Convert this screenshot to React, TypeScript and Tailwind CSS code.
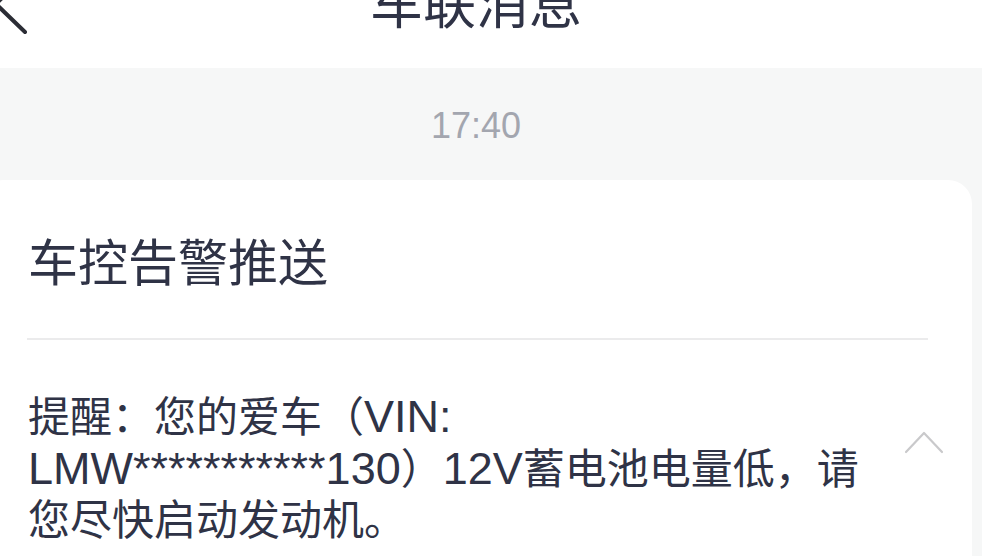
const font = {
  fontFamily:
    '"Liberation Sans", "Noto Sans CJK SC", "Noto Sans", sans-serif',
};

function Header() {
  return (
    <div className="relative h-[68px] bg-white overflow-hidden">
      <svg
        className="absolute left-[20px] top-[-22px]"
        width="40"
        height="60"
        viewBox="0 0 40 60"
        fill="none"
      >
        <path
          d="M28 4 L6 26 L35 54"
          stroke="#2b2d35"
          strokeWidth="4"
          strokeLinecap="round"
          strokeLinejoin="round"
        />
      </svg>
      <div className="flex justify-center">
        <h1 className="mt-[-21px] text-[53px] leading-none text-[#2f3346]">
          车联消息
        </h1>
      </div>
    </div>
  );
}

export default function App() {
  return (
    <div className="w-[982px] h-[556px] overflow-hidden bg-[#f6f7f7]" style={font}>
      <div className="w-[1012px] -ml-[30px]">
        <Header />
        <div className="flex justify-center pt-[40px] pb-[36px]">
          <span className="text-[36px] leading-none text-[#a3a6af]">17:40</span>
        </div>
        <div className="mx-[10px] bg-white rounded-[24px] pl-[48px] pr-[44px] pb-[48px]">
          <div className="pt-[59px] pb-[49px]">
            <h2 className="text-[50px] leading-none text-[#2f3346]">
              车控告警推送
            </h2>
          </div>
          <div className="h-[2px] bg-[#ebebec] ml-[-1px]" />
          <div className="flex items-start pt-[51px]">
            <p className="text-[42px] leading-[51px] text-[#2f3346]">
              <span className="block whitespace-nowrap">
                提醒：您的爱车（<span className="text-[45px]">VIN:</span>
              </span>
              <span className="block whitespace-nowrap">
                <span className="text-[45px]">LMW***********130</span>）
                <span className="text-[45px]">12V</span>蓄电池电量低，请
              </span>
              <span className="block whitespace-nowrap">您尽快启动发动机。</span>
            </p>
            <svg
              className="mt-[38px] ml-auto mr-[-16px] shrink-0"
              width="40"
              height="26"
              viewBox="0 0 40 26"
              fill="none"
            >
              <path
                d="M2 23 L20 4 L38 23"
                stroke="#c9c9cb"
                strokeWidth="2.2"
                strokeLinecap="round"
                strokeLinejoin="round"
              />
            </svg>
          </div>
        </div>
      </div>
    </div>
  );
}
